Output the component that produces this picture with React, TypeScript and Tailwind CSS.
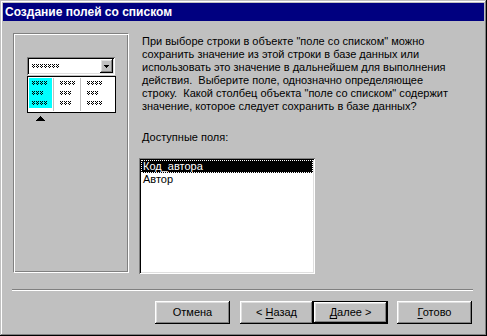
const raised =
  "shadow-[inset_-1px_-1px_#000,inset_1px_1px_#fff,inset_-2px_-2px_#808080,inset_2px_2px_#dfdfdf]";
const sunken =
  "shadow-[inset_1px_1px_#808080,inset_-1px_-1px_#fff,inset_2px_2px_#000,inset_-2px_-2px_#dfdfdf]";

function Hatch({ n }: { n: number }) {
  const dots: [number, number][] = [];
  for (let i = 0; i < n; i++) {
    const x = i * 4;
    dots.push([x, 0], [x + 2, 0], [x + 1, 1], [x, 2], [x + 2, 2], [x + 1, 3]);
  }
  return (
    <svg width={n * 4 - 1} height={4} shapeRendering="crispEdges" className="block">
      {dots.map(([x, y], i) => (
        <rect key={i} x={x} y={y} width={1} height={1} fill="#000" />
      ))}
    </svg>
  );
}

function Column({ counts, active }: { counts: number[]; active?: boolean }) {
  return (
    <div
      className={
        "flex flex-col gap-[6px] pt-[3px] pl-[3px] " +
        (active ? "bg-[#00ffff] w-[23px] h-[30px] m-[1px]" : "w-[26px] h-[34px] pl-[6px] pt-[4px]")
      }
    >
      {counts.map((c, i) => (
        <Hatch key={i} n={c} />
      ))}
    </div>
  );
}

function Button({ label, u, rest, def, w = "w-[75px]" }: { label?: string; u?: string; rest?: string; def?: boolean; w?: string }) {
  return (
    <div className={(def ? "border border-black " : "") + w + " h-[23px]"}>
      <div className={raised + " h-full flex items-center justify-center text-[11px] text-black"}>
        <span className="whitespace-pre">
          {label}
          {u && <span className="underline underline-offset-[2px]">{u}</span>}
          {rest}
        </span>
      </div>
    </div>
  );
}

export default function App() {
  return (
    <div
      className="w-[487px] h-[336px] bg-[#c0c0c0] p-[3px] flex flex-col shadow-[inset_-1px_-1px_#000,inset_1px_1px_#c0c0c0,inset_-2px_-2px_#808080,inset_2px_2px_#fff]"
      style={{ fontFamily: '"Liberation Sans", Arial, sans-serif' }}
    >
      <div className="h-[18px] bg-[#000080] text-white font-bold text-[12px] pl-[2px] flex items-center">
        Создание полей со списком
      </div>

      <div className="flex flex-col pt-[12px] pl-[10px]">
        <div className="flex">
          <div className="w-[116px] h-[240px] border border-t-[#808080] border-l-[#808080] border-b-white border-r-white shadow-[inset_1px_1px_#fff,inset_-1px_-1px_#808080] pt-[23px] pl-[13px]">
            <div className={sunken + " w-[88px] h-[18px] bg-white flex items-center justify-between pl-[5px] pr-[2px]"}>
              <Hatch n={7} />
              <div className={raised + " w-[13px] h-[14px] bg-[#c0c0c0] flex items-center justify-center"}>
                <svg width="5" height="3" shapeRendering="crispEdges">
                  <polygon points="0,0 5,0 2.5,3" fill="#000" />
                </svg>
              </div>
            </div>
            <div className="mt-[1px] w-[89px] h-[37px] border border-black bg-white flex">
              <Column counts={[4, 3, 4]} active />
              <div className="w-[1px] h-[33px] mt-[1px] bg-[#c0c0c0]" />
              <Column counts={[4, 3, 3]} />
              <div className="w-[1px] h-[33px] mt-[1px] bg-[#c0c0c0]" />
              <Column counts={[4, 3, 4]} />
            </div>
            <svg width="9" height="5" className="mt-[3px] ml-[9px] block" shapeRendering="crispEdges">
              <polygon points="4.5,0 9,5 0,5" fill="#000" />
            </svg>
          </div>

          <div className="ml-[10px] flex flex-col text-[11px] text-black">
            <div className="pl-[3px] mt-[2px] leading-[13px] whitespace-pre">
              {'При выборе строки в объекте "поле со списком" можно\n' +
                "сохранить значение из этой строки в базе данных или\n" +
                "использовать это значение в дальнейшем для выполнения\n" +
                "действия.  Выберите поле, однозначно определяющее\n" +
                'строку.  Какой столбец объекта "поле со списком" содержит\n' +
                "значение, которое следует сохранить в базе данных?"}
            </div>
            <div className="pl-[3px] mt-[18px] leading-[13px]">Доступные поля:</div>
            <div className={sunken + " mt-[14px] w-[176px] h-[116px] bg-white p-[2px] leading-[13px]"}>
              <div className="h-[13px] bg-black text-white border border-dotted border-white pl-[1px] leading-[11px]">
                Код_автора
              </div>
              <div className="h-[13px] pl-[2px]">Автор</div>
            </div>
          </div>
        </div>

        <div className="mt-[15px] ml-[-1px] w-[461px] h-[2px] border-t border-t-[#808080] border-b border-b-white" />

        <div className="mt-[10px] flex">
          <div className="ml-[142px]">
            <Button label="Отмена" />
          </div>
          <div className="ml-[10px]">
            <Button label="< " u="Н" rest="азад" w="w-[73px]" />
          </div>
          <Button u="Д" rest="алее >" def />
          <div className="ml-[9px]">
            <Button u="Г" rest="отово" />
          </div>
        </div>
      </div>
    </div>
  );
}
